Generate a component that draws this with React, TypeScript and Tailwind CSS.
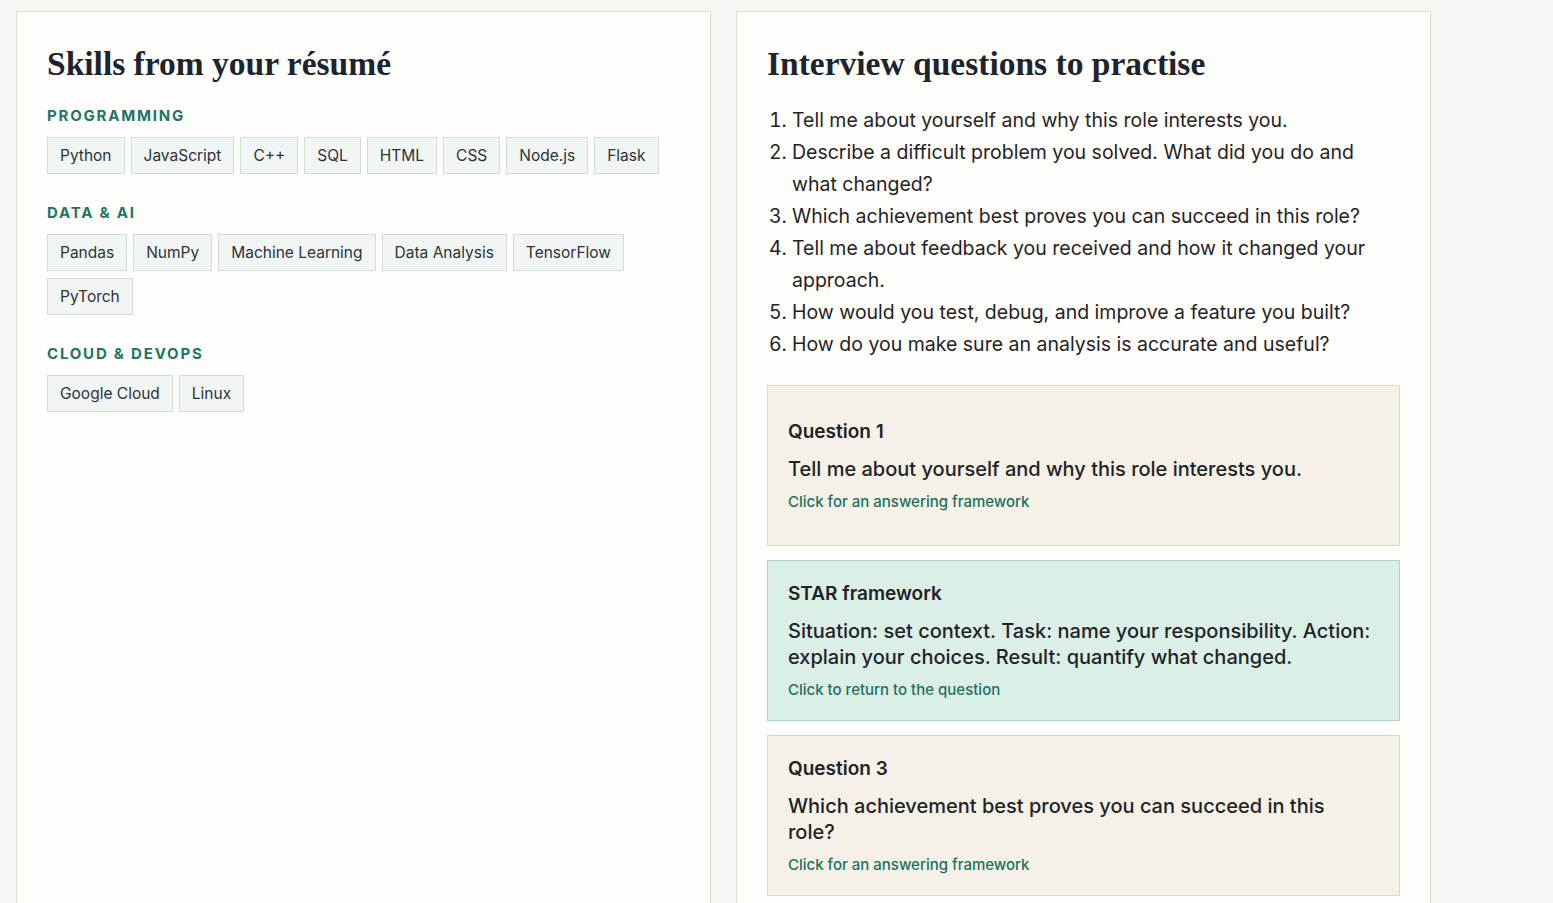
import React from "react";

const sans = { fontFamily: "Inter, 'Noto Sans', sans-serif" };
const serif = { fontFamily: "'Liberation Serif', 'DejaVu Serif', serif" };

const groups: { label: string; items: string[] }[] = [
  { label: "PROGRAMMING", items: ["Python", "JavaScript", "C++", "SQL", "HTML", "CSS", "Node.js", "Flask"] },
  { label: "DATA & AI", items: ["Pandas", "NumPy", "Machine Learning", "Data Analysis", "TensorFlow", "PyTorch"] },
  { label: "CLOUD & DEVOPS", items: ["Google Cloud", "Linux"] },
];

const questions = [
  "Tell me about yourself and why this role interests you.",
  "Describe a difficult problem you solved. What did you do and what changed?",
  "Which achievement best proves you can succeed in this role?",
  "Tell me about feedback you received and how it changed your approach.",
  "How would you test, debug, and improve a feature you built?",
  "How do you make sure an analysis is accurate and useful?",
];

function QCard({ title, text, link, star }: { title: string; text: string; link: string; star?: boolean }) {
  return (
    <div
      className={
        "flex min-h-[161px] flex-col justify-center border py-5 pl-5 pr-[26px] " +
        (star ? "border-[#a9d6c6] bg-[#dbefe7]" : "border-[#e2d9bd] bg-[#f5f1e6]")
      }
    >
      <div className="text-[19px] font-semibold leading-[26px] text-[#1f2328]">{title}</div>
      <div className="mt-[11px] text-[20px] font-medium leading-[26px] text-[#1f2328]">{text}</div>
      <div className="mt-[10px] text-[15px] font-medium leading-[20px] text-[#1b7162]">{link}</div>
    </div>
  );
}

export default function App() {
  return (
    <div className="h-[903px] overflow-hidden bg-[#f6f5f1]" style={sans}>
      <div className="flex gap-[25px] pl-4 pt-[11px]">
        <div className="h-[1000px] w-[695px] border border-[#dedbd3] bg-[#fffefb] px-[30px] pt-[30px]">
          <h2 className="text-[33.5px] font-bold leading-[44px] text-[#1c2430]" style={serif}>
            Skills from your résumé
          </h2>
          <div className="mt-[20px]">
            {groups.map((g, gi) => (
              <div key={g.label} className={gi > 0 ? "mt-[29px]" : ""}>
                <div className="text-[15px] font-bold leading-[20px] tracking-[0.12em] text-[#1d7566]">{g.label}</div>
                <div className="mt-[11px] flex flex-wrap gap-x-[6px] gap-y-[7px]">
                  {g.items.map((s) => (
                    <span
                      key={s}
                      className="flex h-[37px] items-center border border-[#cfddd8] bg-[#f1f5f4] px-3 text-[15.5px] text-[#2d3338]"
                    >
                      {s}
                    </span>
                  ))}
                </div>
              </div>
            ))}
          </div>
        </div>

        <div className="h-[1000px] w-[695px] border border-[#dedbd3] bg-[#fffefb] px-[30px] pt-[30px]">
          <h2 className="text-[33.5px] font-bold leading-[44px] text-[#1c2430]" style={serif}>
            Interview questions to practise
          </h2>
          <ol className="mt-[18px] list-decimal pl-[25px] text-[19.5px] leading-[32px] text-[#1f2328]">
            {questions.map((q) => (
              <li key={q}>{q}</li>
            ))}
          </ol>
          <div className="mt-[25px] flex flex-col gap-[14px]">
            <QCard title="Question 1" text={questions[0]} link="Click for an answering framework" />
            <QCard
              star
              title="STAR framework"
              text="Situation: set context. Task: name your responsibility. Action: explain your choices. Result: quantify what changed."
              link="Click to return to the question"
            />
            <QCard title="Question 3" text={questions[2]} link="Click for an answering framework" />
          </div>
        </div>
      </div>
    </div>
  );
}
